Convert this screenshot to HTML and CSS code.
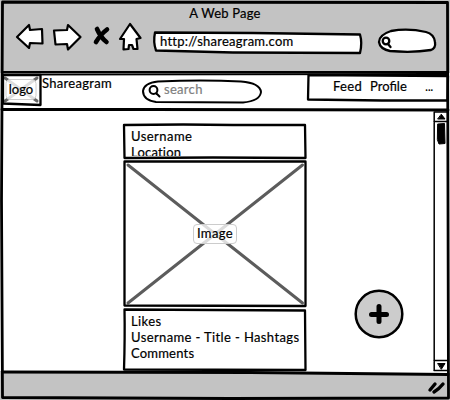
FILE: index.html
```html
<!DOCTYPE html>
<html lang="en">
<head>
<meta charset="utf-8">
<title>A Web Page</title>
<link rel="stylesheet" href="styles.css">
</head>
<body>
<div class="window">
  <header class="chrome">
    <div class="title">A Web Page</div>
    <div class="controls">
      <svg class="nav-icons" width="130" height="34" viewBox="14 20 130 34">
        <path d="M17 37 L29 25 L30 30 L42 29 L42.500 43.500 L30 43 L29 48 Z"/>
        <path d="M54 30.500 L67 30 L68 25 L80.500 37 L68 49.500 L67 44 L55.500 44.500 Z"/>
        <path class="cross" d="M97 29 Q101 38 106.500 42 M107 29.500 Q101 34 96 42"/>
        <path d="M130 24 L140.500 38 L136.500 39 L137.500 49 L133.500 49 L132 45 L129 45 L128.500 49 L123.500 49.500 L124 39 L120 39 Z"/>
      </svg>
      <div class="address">
        <svg class="sketch" width="210" height="24" viewBox="0 0 210 24"><path d="M2 1.500 L100 2 L207 3.500 Q209.500 12 207 22 L80 21.500 L3 19.500 Q0 11 2 1.500Z"/></svg>
        <span>http://shareagram.com</span>
      </div>
      <svg class="find" width="60" height="25" viewBox="0 0 60 25">
        <path d="M14 2 Q31 -1 49 3 Q57 5 58 13 Q59 19 54 21 Q36 24 13 22 Q3 20 2 13 Q2 6 14 2Z"/>
        <circle cx="9" cy="12" r="3.300"/><path d="M11 15 L13.500 18"/>
      </svg>
    </div>
  </header>
  <div class="toolbar">
    <div class="logo">
      <svg class="sketch" width="40" height="33" viewBox="0 0 40 33"><path class="ends" d="M3 3 L35 26 M35 3 L3 26"/><rect class="halo" x="4" y="4.500" width="30" height="20" rx="4"/><path class="box" d="M1 0 L38.500 0 L38.500 30 L1 28.500Z"/></svg>
      <span>logo</span>
    </div>
    <div class="brand">Shareagram</div>
    <div class="search">
      <svg class="sketch" width="120" height="25" viewBox="0 0 120 25"><path d="M16 2.500 Q60 .5 99 2.500 Q118 4 119 13 Q118 22 101 23.500 L14 23 Q1 21 1 12 Q2 4 16 2.500Z"/><circle cx="11.500" cy="11" r="3.900"/><path d="M14.500 14.500 L17.500 17.500"/></svg>
      <span>search</span>
    </div>
    <nav class="menu">
      <svg class="sketch" width="142" height="29" viewBox="0 0 142 29"><path d="M1.500 1 L141 2 L140.500 26.500 L75 26.500 L1 25.500Z"/></svg>
      <a class="feed">Feed</a><a class="profile">Profile</a><a class="more">...</a>
    </nav>
  </div>
  <main class="content">
    <article class="post">
      <section class="author">
        <svg class="sketch" width="184" height="38" viewBox="0 0 184 38"><path d="M1 2 L60 1.500 L110 2 L182 2 L182.500 35 L90 34.500 L1.500 35Z"/></svg>
        <p class="user">Username</p><p class="place">Location</p>
      </section>
      <section class="photo">
        <svg class="sketch" width="184" height="148" viewBox="0 0 184 148"><path class="diagonal" d="M5 5 L179.500 143 M179.500 5 L5 143"/><path d="M1.500 1.500 L182.500 1.500 L182.500 146 L1.500 145.500Z"/></svg>
        <span>Image</span>
      </section>
      <section class="details">
        <svg class="sketch" width="184" height="64" viewBox="0 0 184 64"><path d="M1.500 1.500 L182 2.500 L182.500 62 L1 61.500 Q2 30 1.500 1.500Z"/></svg>
        <p class="likes">Likes</p><p class="caption">Username - Title - Hashtags</p><p class="comments">Comments</p>
      </section>
    </article>
    <svg class="add" width="50" height="50" viewBox="0 0 50 50"><circle cx="25" cy="25" r="23.300"/><path d="M25 17.500 V32.500 M17.500 25.500 H32.500"/></svg>
    <svg class="scroll" width="16" height="262" viewBox="0 0 16 262">
      <path d="M1.200 1 H15 M1.200 1 V259.500 M1 10.500 H15 M1 249.500 H15 M1 259.500 H15"/>
      <path class="solid" d="M8.500 3.500 L12 8 H5Z M5 252.500 H12 L8.500 258Z"/>
      <path class="solid" d="M5 13 L11.500 12.500 L12 32.500 L6 33 L4.500 29Z"/>
    </svg>
  </main>
  <footer class="status">
    <svg class="grip" width="18" height="16" viewBox="0 0 18 16"><path d="M3 11 L8 5 M7 13 Q12 10 16 5"/></svg>
  </footer>
  <svg class="sketch frame" width="450" height="400" viewBox="0 0 450 400">
    <path d="M2.500 2 L447.500 2.500 L448.500 398 L230 398.500 L2.500 397.500 L1.500 200Z"/>
    <path class="divider" d="M2 72 L448 72 M2 74.500 L448 74"/>
    <path d="M2 109.500 L150 109.500 L448 110 M2 372 L250 372.500 L448 374.500"/>
  </svg>
</div>
</body>
</html>
```
FILE: styles.css
```css
* { box-sizing: border-box; }
body { margin: 0; font: 13px/16px Lato, "Open Sans", sans-serif; color: #000; -webkit-text-stroke: .2px; }
p { margin: 0; white-space: nowrap; }
svg { display: block; flex: none; overflow: visible; fill: none; stroke: #000; stroke-width: 2.3; stroke-linecap: round; stroke-linejoin: round; }
.window { position: relative; width: 450px; height: 400px; display: flex; flex-direction: column; overflow: hidden; background: #fff; }
.sketch { position: absolute; left: 0; top: 0; }
.sketch ~ span, .sketch ~ p, .sketch ~ a { position: relative; }
.frame { pointer-events: none; stroke-width: 2.8; }
.divider { stroke-width: 1.8; }

.chrome { height: 73px; background: #c3c3c3; padding-top: 5px; }
.title { text-align: center; letter-spacing: .2px; }
.controls { display: flex; align-items: flex-start; padding: 0 0 0 14px; }
.nav-icons { margin-top: -1px; fill: #fff; stroke-width: 2.2; }
.nav-icons .cross { stroke-width: 4.6; fill: none; }
.address { position: relative; width: 210px; height: 24px; margin: 10px 0 0 9px; padding: 2px 0 0 7px; }
.address svg { fill: #fff; }
.address span { letter-spacing: .25px; }
.find { margin: 8px 0 0 14px; fill: #fff; }

.toolbar { height: 37px; display: flex; align-items: flex-start; padding-left: 2px; }
.logo { position: relative; width: 40px; height: 33px; margin-top: 2px; padding-top: 6px; text-align: center; }
.logo span { left: -1px; }
.ends { stroke: #666; stroke-width: 3; }
.halo { fill: #ffffffc8; stroke: #ccc; stroke-width: 1; }
.brand { width: 100px; margin-top: 2px; letter-spacing: .3px; }
.search { position: relative; width: 120px; height: 25px; margin-top: 6px; padding: 2px 0 0 22px; color: #808080; }
.search svg { stroke-width: 2; }
.search span { letter-spacing: .3px; }
.menu { position: relative; width: 142px; height: 29px; margin: 1px 0 0 45px; padding: 4px 0 0 26px; display: flex; }
.feed { width: 37px; letter-spacing: .3px; }
.profile { width: 55px; letter-spacing: 0; }
.more { letter-spacing: -.4px; -webkit-text-stroke: 0; }

.content { height: 263px; display: flex; align-items: flex-start; }
.post { width: 184px; margin: 13px 0 0 123px; }
.author { position: relative; height: 37px; padding: 5px 8px 0; }
.author .place { height: 12px; overflow: hidden; }
.photo { position: relative; height: 148px; padding-bottom: 1px; display: flex; align-items: center; justify-content: center; }
.photo span { width: 44px; height: 20px; line-height: 17px; text-align: center; letter-spacing: .4px; background: #ffffffc8; border: 1px solid #ccc; border-radius: 4px; }
.diagonal { stroke: #5c5c5c; stroke-width: 3; }
.details { position: relative; height: 64px; padding: 5px 8px; }
.user { letter-spacing: .45px; }
.place, .comments { letter-spacing: .2px; }
.likes { letter-spacing: .4px; }
.caption { letter-spacing: .38px; }
.add { margin: 179px 0 0 47px; fill: #ccc; stroke-width: 2.5; }
.add path { stroke-width: 5; }
.scroll { margin: 1px 0 0 29px; stroke-width: 1.5; }
.solid { fill: #000; stroke-width: 1; }

.status { height: 27px; display: flex; justify-content: flex-end; padding: 6px 5px 0 0; background: #c3c3c3; }
.grip { stroke-width: 3.4; }
```
